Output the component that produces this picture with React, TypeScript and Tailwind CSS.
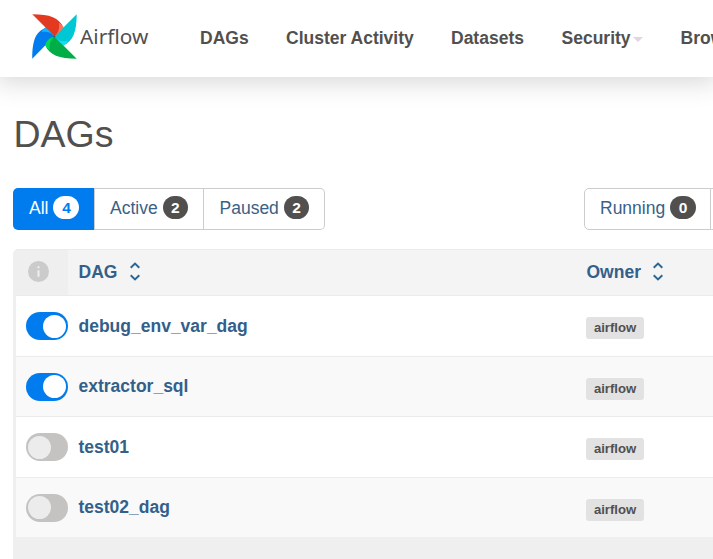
import React from "react";

const navItems = [
  { label: "DAGs", width: "w-[86px]", caret: false },
  { label: "Cluster Activity", width: "w-[165px]", caret: false },
  { label: "Datasets", width: "w-[110.5px]", caret: false },
  { label: "Security", width: "w-[119px]", caret: true },
  { label: "Browse", width: "w-[100px]", caret: true },
];

const dags = [
  { name: "debug_env_var_dag", on: true, row: "h-[61px] bg-white border-b" },
  { name: "extractor_sql", on: true, row: "h-[60px] bg-[#f9f9f9] border-b" },
  { name: "test01", on: false, row: "h-[61px] bg-white border-b" },
  { name: "test02_dag", on: false, row: "h-[59px] bg-[#f9f9f9]" },
];

function Pinwheel() {
  return (
    <svg className="ml-8 mt-3.5 h-[45px] w-[45px] shrink-0" viewBox="0 0 45 45">
      <path d="M0.3 44.7 L13.4 31.2 C17 27.5 19.5 25 22.4 22.4 C22 17.5 18 14 14 13.4 C3.5 18 0.3 26 0.3 44.7Z" fill="#017cee" />
      <path d="M22.4 22.4 C20.5 17 17.5 14 14 13.2 C12.3 14.3 10.7 16 9.4 18 C14 17 19 18 22.4 22.4Z" fill="#11b5ff" />
      <path d="M0.3 0.2 L13.5 13.4 C17 16.5 20 19.5 22.4 22.4 C27.5 22 31 18 31.6 13.8 C27 3.5 18 0.2 0.3 0.2Z" fill="#e43921" />
      <path d="M22.4 22.4 C27.5 20.5 30.7 17.5 31.6 13.4 C30.4 11.6 28.8 10 26.8 8.8 C27.8 14 26.8 19 22.4 22.4Z" fill="#ff7557" />
      <path d="M44.7 0.2 L31.4 13.5 C28.5 17 25.5 20 22.4 22.4 C22.8 27.5 27 31 31.2 31.6 C41 27 44.7 18 44.7 0.2Z" fill="#00c7d4" />
      <path d="M22.4 22.4 C24 27.5 27.3 30.7 31.4 31.5 C33.2 30.3 34.8 28.8 36 26.8 C31 27.8 26 26.8 22.4 22.4Z" fill="#11e1ee" />
      <path d="M44.7 44.7 L31.4 31.4 C28 28.5 25 25.5 22.4 22.4 C17.5 22.8 14 27 13.3 31.2 C17.5 41 27 44.7 44.7 44.7Z" fill="#00ad46" />
      <path d="M22.4 22.4 C17.3 24 14 27.3 13.3 31.4 C14.5 33.2 16 34.8 18 36 C17 31 18 26 22.4 22.4Z" fill="#04d659" />
      <circle cx="22.4" cy="22.4" r="1" fill="#51504f" />
    </svg>
  );
}

function SortIcon() {
  return (
    <svg className="-mt-0.5 ml-[12.5px] h-[19px] w-[10px]" viewBox="0 0 10 19" fill="none" stroke="#2d6593" strokeWidth="2">
      <path d="M0.7 5.8 L5 1.6 L9.3 5.8M0.7 13.2 L5 17.4 L9.3 13.2" />
    </svg>
  );
}

function Count({ value, light = false }: { value: number; light?: boolean }) {
  return (
    <span
      className={`mb-0.5 flex h-[23px] items-center justify-center rounded-full text-[15.5px] font-bold ${
        light ? "w-[26px] bg-white text-[#017cee]" : "w-[25.5px] bg-[#51504f] text-white"
      }`}
    >
      {value}
    </span>
  );
}

function Toggle({ on }: { on: boolean }) {
  return (
    <span
      className={`flex h-7 w-[42px] items-center rounded-full ${
        on ? "justify-end bg-[#017cee] pr-[2px]" : "bg-[#c4c3c2] pl-[2px]"
      }`}
    >
      <span className={`h-[23px] w-[23px] rounded-full ${on ? "bg-white" : "bg-[#edecec]"}`} />
    </span>
  );
}

export default function App() {
  return (
    <div className="h-[559px] w-[713px] overflow-hidden bg-white font-['Liberation_Sans',Arial,sans-serif] text-[17.5px] leading-[25px] text-[#51504f]">
      <header className="flex h-[77px] bg-white shadow-[0_0_25px_5px_rgba(0,0,0,0.16)]">
        <div className="flex w-[200px] shrink-0">
          <Pinwheel />
          <span className="ml-[3px] mt-6 font-['Noto_Sans',sans-serif] text-[20.8px] leading-[25px]">Airflow</span>
        </div>
        <nav className="flex pt-[26px] font-bold leading-[25px]">
          {navItems.map((item) => (
            <a key={item.label} className={`flex shrink-0 items-start ${item.width}`}>
              {item.label}
              {item.caret && (
                <svg className="ml-[2px] mt-[11px] h-[5px] w-[10px]" viewBox="0 0 10 5">
                  <path d="M0 0H10L5 5Z" fill="#e5d2e4" />
                </svg>
              )}
            </a>
          ))}
        </nav>
      </header>

      <main className="pl-[13px]">
        <h2 className="mt-[37px] pl-[0.5px] text-[37.5px] leading-[41px]">DAGs</h2>

        <div className="mt-[33px] flex justify-between">
          <div className="flex h-[42px] text-[#3a6186]">
            <div className="flex w-[81px] items-center gap-[5px] rounded-l-[5px] bg-[#017cee] pb-px pl-4 text-white">
              All <Count value={4} light />
            </div>
            <div className="flex w-[110px] items-center gap-[5px] border border-[#ccc] pb-px pl-[15px]">
              Active <Count value={2} />
            </div>
            <div className="flex w-[121px] items-center gap-[5px] rounded-r-[5px] border border-l-0 border-[#ccc] pb-px pl-[15.5px]">
              Paused <Count value={2} />
            </div>
          </div>
          <div className="flex h-[42px] text-[#3a6186]">
            <div className="flex w-[127px] items-center gap-[5px] rounded-l-[5px] border border-[#ccc] pb-px pl-[15px]">
              Running <Count value={0} />
            </div>
            <div className="w-[2px] border-y border-[#ccc]" />
          </div>
        </div>

        <section className="mt-[19px] h-[310px] rounded-tl-[5px] bg-[#efefef] pl-[3px]">
          <div className="flex h-[47px] border-b border-t border-[#ebebeb] font-bold text-[#33608a]">
            <div className="flex w-[52px] items-center pl-[12px]">
              <svg className="-mt-0.5 h-[21px] w-[21px]" viewBox="0 0 21 21">
                <circle cx="10.5" cy="10.5" r="10.5" fill="#cbcbcb" />
                <path d="M9.5 5.2h2v2h-2zM9.5 9.2h2v6.5h-2z" fill="#efefef" />
              </svg>
            </div>
            <div className="flex w-[508px] items-center bg-[#f4f4f4] pl-[10.5px]">
              DAG <SortIcon />
            </div>
            <div className="flex flex-1 items-center bg-[#f4f4f4] pl-[10.5px]">
              Owner <SortIcon />
            </div>
          </div>
          {dags.map((dag) => (
            <div key={dag.name} className={`flex items-center border-[#ebebeb] ${dag.row}`}>
              <div className="w-[62.5px] pl-2.5">
                <Toggle on={dag.on} />
              </div>
              <div className="w-[507.5px] font-bold text-[#33608a]">{dag.name}</div>
              <span className="mt-1 h-[22px] w-[58px] rounded-[3px] bg-[#e2e2e2] text-center text-[13.125px] font-bold leading-[21px]">
                airflow
              </span>
            </div>
          ))}
        </section>
      </main>
    </div>
  );
}
